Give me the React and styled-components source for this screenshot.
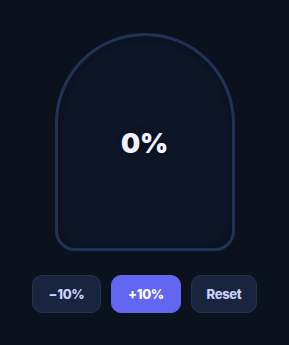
import React from "react";
import styled, { createGlobalStyle } from "styled-components";

const Global = createGlobalStyle`
  html, body { margin: 0; padding: 0; background: #0b111d; }
  body { font-family: Inter, "Noto Sans", sans-serif; }
  #root { min-height: 100vh; }
`;

const Page = styled.div`
  min-height: 100vh;
  display: flex;
  flex-direction: column;
  align-items: center;
  justify-content: center;
  gap: 24px;
`;

const Bulb = styled.div`
  box-sizing: border-box;
  width: 180px;
  height: 218px;
  border: 3px solid #223256;
  border-radius: 90px 90px 20px 20px;
  background: #0e1729;
  box-shadow: inset 0 0 18px rgba(0, 0, 0, 0.35);
  display: flex;
  align-items: center;
  justify-content: center;
`;

const Value = styled.div`
  font-size: 27px;
  font-weight: 900;
  color: #eef4ff;
  letter-spacing: -0.3px;
  margin-top: 4px;
  text-shadow: 0 0 8px rgba(0, 0, 0, 0.6);
`;

const Row = styled.div`
  display: flex;
  gap: 10px;
`;

const Button = styled.button`
  box-sizing: border-box;
  height: 38px;
  padding: 0 14px;
  border-radius: 10px;
  font-family: Inter, "Noto Sans", sans-serif;
  font-size: 13px;
  font-weight: 800;
  letter-spacing: -0.3px;
  cursor: pointer;
  border: 1px solid ${(p) => (p.$primary ? "#6366f1" : "#26344f")};
  background: ${(p) => (p.$primary ? "#6366f1" : "#19243e")};
  color: ${(p) => (p.$primary ? "#ffffff" : "#c9d4fb")};
  width: ${(p) => p.$w}px;
`;

export default function App() {
  return (
    <>
      <Global />
      <Page>
        <Bulb>
          <Value>0%</Value>
        </Bulb>
        <Row>
          <Button $w={69}>−10%</Button>
          <Button $primary $w={70}>+10%</Button>
          <Button $w={66}>Reset</Button>
        </Row>
      </Page>
    </>
  );
}
